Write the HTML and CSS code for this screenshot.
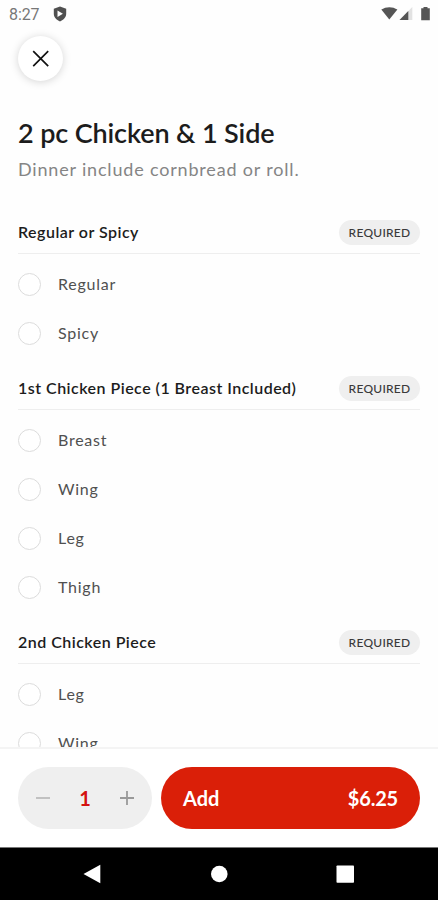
FILE: index.html
```html
<!DOCTYPE html>
<html lang="en">
<head>
<meta charset="utf-8">
<meta name="viewport" content="width=device-width, initial-scale=1">
<title>2 pc Chicken &amp; 1 Side</title>
<link rel="stylesheet" href="styles.css">
</head>
<body>
<div class="screen">
  <header class="status">
    <span class="clock">8:27</span>
    <svg class="shield" width="14" height="16" viewBox="0 0 14 16"><path fill="#505050" fill-rule="evenodd" d="M7 .5 13.2 2.700v5.100c0 3.500-2.500 6.200-6.200 7.700C3.300 14 .8 11.300.8 7.800V2.700zM4.500 4.500v6.400l5.400-3.200z"/></svg>
    <svg class="signals" width="50" height="16" viewBox="0 0 50 16">
      <path fill="#555" d="M.3 3.600C4.900.300 11.800.300 16.400 3.600L8.300 13.600z"/>
      <path fill="#e2e2e2" d="M31.300 1v13H18.500z"/>
      <path fill="#555" d="M27.300 5v9h-8.800z"/>
      <path fill="#555" d="M42.500 1h4v1.300h2.300V14.200h-8.600V2.300h2.300z"/>
    </svg>
  </header>
  <main class="content">
    <button class="close" aria-label="Close"><svg width="18" height="18" viewBox="0 0 18 18"><path d="M1.200 1.200l15 15M16.200 1.200l-15 15" stroke="#111" stroke-width="1.700"/></svg></button>
    <h1>2 pc Chicken &amp; 1 Side</h1>
    <p class="desc">Dinner include cornbread or roll.</p>
    <section>
      <div class="head"><h2>Regular or Spicy</h2><span class="pill">REQUIRED</span></div>
      <ul><li><i></i><span>Regular</span></li><li><i></i><span>Spicy</span></li></ul>
    </section>
    <section>
      <div class="head"><h2>1st Chicken Piece (1 Breast Included)</h2><span class="pill">REQUIRED</span></div>
      <ul><li><i></i><span>Breast</span></li><li><i></i><span>Wing</span></li><li><i></i><span>Leg</span></li><li><i></i><span>Thigh</span></li></ul>
    </section>
    <section>
      <div class="head"><h2>2nd Chicken Piece</h2><span class="pill">REQUIRED</span></div>
      <ul><li><i></i><span>Leg</span></li><li><i></i><span>Wing</span></li></ul>
    </section>
  </main>
  <footer class="bar">
    <div class="qty">
      <svg width="14" height="14" viewBox="0 0 14 14"><path d="M0 7h14" stroke="#bcbcbc" stroke-width="1.800"/></svg>
      <span>1</span>
      <svg width="14" height="14" viewBox="0 0 14 14"><path d="M0 7h14M7 0v14" stroke="#999" stroke-width="1.800"/></svg>
    </div>
    <button class="add"><span>Add</span><span class="price">$6.25</span></button>
  </footer>
  <nav class="nav">
    <svg width="438" height="52" viewBox="0 0 438 52" fill="#fff"><path d="M83.500 26 100.300 16.700v18.600z"/><circle cx="219.300" cy="26" r="8.300"/><rect x="336.500" y="17.500" width="17.500" height="17.300" rx=".8"/></svg>
  </nav>
</div>
</body>
</html>
```
FILE: styles.css
```css
* { box-sizing: border-box; margin: 0; padding: 0; }
body { background: #fefefe; font-family: Lato, "Liberation Sans", sans-serif; color: #1c1c1c; }
button { border: 0; font: inherit; }
.screen { height: 900px; width: 438px; display: flex; flex-direction: column; overflow: hidden; }
.status { height: 28px; flex: none; display: flex; align-items: center; padding: 0 7px 0 9px; }
.clock { font: 400 16px/28px Roboto, sans-serif; color: #777; letter-spacing: -.1px; width: 44px; padding-top: 2px; }
.signals { margin-left: auto; }
.content { flex: 1; min-height: 0; overflow: hidden; padding: 8px 18px 0; }
.close { display: flex; align-items: center; justify-content: center; width: 45px; height: 45px; border-radius: 50%; background: #fff; box-shadow: 0 1px 9px rgba(0, 0, 0, .17); }
h1 { margin-top: 35px; font-size: 27px; line-height: 34px; font-weight: 600; letter-spacing: -.12px; }
.desc { margin-top: 7px; height: 24px; font-size: 18px; line-height: 24px; color: #858585; letter-spacing: .82px; margin-bottom: 39px; }
section { margin-bottom: 18px; }
.head { display: flex; align-items: center; justify-content: space-between; height: 34px; padding-bottom: 8px; border-bottom: 1px solid #eee; white-space: nowrap; }
h2 { font-size: 16px; line-height: 24px; font-weight: 600; letter-spacing: .48px; padding-bottom: 1px; }
.pill { width: 81px; height: 25px; border-radius: 13px; background: #efefef; color: #3a3a3a; font-size: 12px; line-height: 25px; font-weight: 500; letter-spacing: .25px; text-align: center; }
ul { list-style: none; padding-top: 6px; }
li { display: flex; align-items: center; height: 49px; gap: 17px; font-size: 16px; letter-spacing: .75px; color: #505050; }
li span { padding-bottom: 2px; }
i { width: 23px; height: 23px; border: 1px solid #dcdcdc; border-radius: 50%; background: #fff; }
.bar { flex: none; height: 100px; display: flex; gap: 9px; padding: 18px 18px 0; border-top: 2px solid #f4f4f4; background: #fff; }
.qty { width: 134px; height: 62px; border-radius: 31px; background: #efefef; display: flex; align-items: center; justify-content: space-between; padding: 0 18px; color: #d41210; font-size: 20px; font-weight: 700; }
.add { flex: 1; height: 62px; border-radius: 31px; background: #da1f08; color: #fff; display: flex; align-items: center; justify-content: space-between; padding: 0 22px; font-size: 20px; font-weight: 700; }
.price { letter-spacing: -.2px; }
.nav { flex: none; height: 53px; background: #000; border-top: 1px solid #777; }
.nav svg { display: block; }
```
